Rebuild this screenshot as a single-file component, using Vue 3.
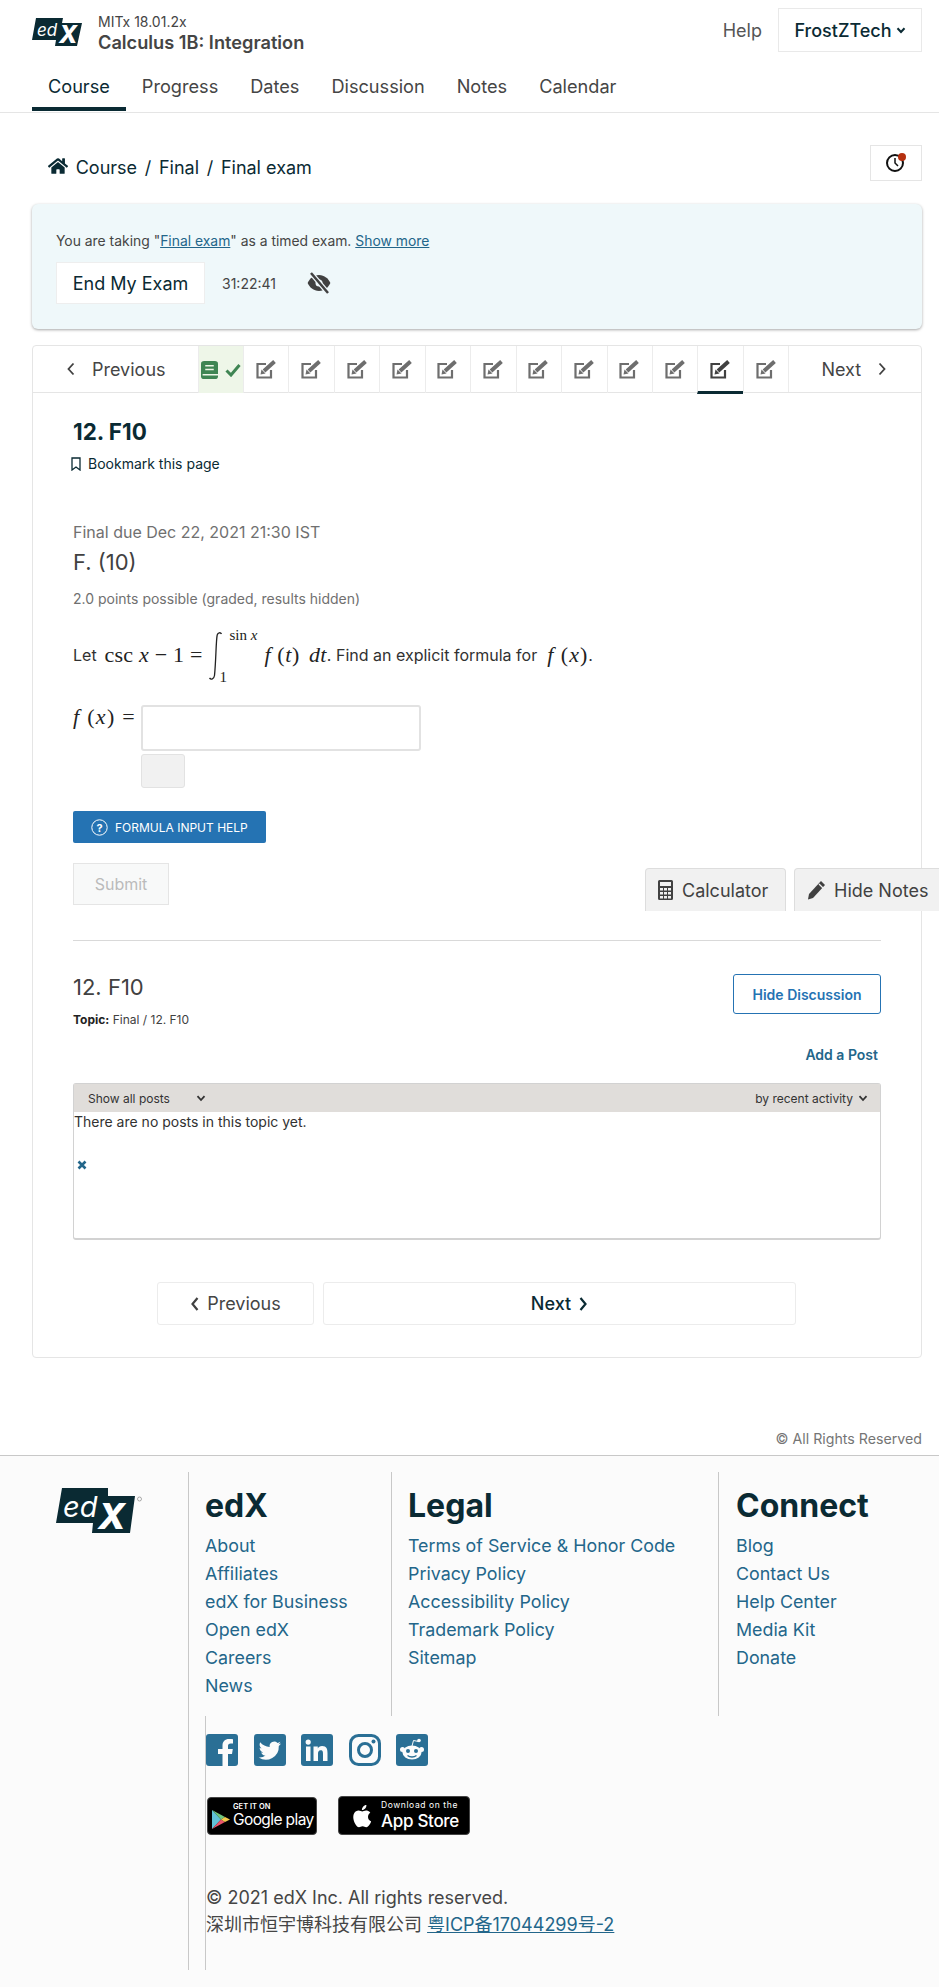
<template>
  <div class="page">
    <header class="top">
      <div class="top-row">
        <svg class="logo" viewBox="0 0 50 32">
          <polygon points="4,0 31,0 30,5 50,5 45,28 23,28 24,22 0,22" fill="#0a2a33" />
          <text x="5" y="18" font-size="17" font-style="italic" fill="#fff" class="logo-text">ed</text>
          <text x="27" y="25" font-size="24" font-weight="800" font-style="italic" fill="#fff" class="logo-text">X</text>
        </svg>
        <div class="course-name">
          <div class="course-org">MITx 18.01.2x</div>
          <div class="course-title">Calculus 1B: Integration</div>
        </div>
        <a class="help">Help</a>
        <div class="user-btn">
          FrostZTech
          <svg class="caret" viewBox="0 0 10 10"><path d="M1.5 3.2 5 7l3.5-3.8" fill="none" stroke="#0a2a33" stroke-width="2" /></svg>
        </div>
      </div>
      <nav class="tabs">
        <a v-for="(t, i) in tabs" :key="t" class="tab" :class="{ on: i === 0 }">{{ t }}</a>
      </nav>
    </header>

    <main class="main">
      <div class="crumb-row">
        <div class="crumbs">
          <svg class="home" viewBox="0 0 576 512"><path fill="#0a2a33" d="M280 148 96 300v164a16 16 0 0 0 16 16l112-.3a16 16 0 0 0 16-16V368a16 16 0 0 1 16-16h64a16 16 0 0 1 16 16v95.600a16 16 0 0 0 16 16l112 .4a16 16 0 0 0 16-16V300L296 148a12 12 0 0 0-16 0zM572 251l-84-69V44a12 12 0 0 0-12-12h-56a12 12 0 0 0-12 12v72l-89-74a48 48 0 0 0-61 0L4 251a12 12 0 0 0-2 17l26 31a12 12 0 0 0 17 2L280 107a12 12 0 0 1 16 0l235 194a12 12 0 0 0 17-2l26-31a12 12 0 0 0-2-17z" /></svg>
          <span>Course</span><span class="slash">/</span><span>Final</span><span class="slash">/</span><span>Final exam</span>
        </div>
        <div class="clock-btn">
          <svg viewBox="0 0 24 24" width="24" height="24">
            <circle cx="11" cy="12" r="8" fill="none" stroke="#111" stroke-width="2" />
            <path d="M11 7v5l3 3" fill="none" stroke="#111" stroke-width="1.500" />
            <circle cx="18" cy="6" r="4" fill="#b5300f" />
          </svg>
        </div>
      </div>

      <section class="banner">
        <p class="banner-text">You are taking "<a>Final exam</a>" as a timed exam. <a>Show more</a></p>
        <div class="banner-row">
          <div class="end-btn">End My Exam</div>
          <span class="timer">31:22:41</span>
          <svg class="eye" viewBox="0 0 24 22">
            <path fill="#414141" d="M12 3C6.500 3 2.500 6.800 .6 11c1.900 4.200 5.900 8 11.400 8s9.500-3.800 11.400-8C21.500 6.800 17.500 3 12 3z" />
            <circle cx="12" cy="11" r="3.500" fill="#f0f8fb" />
            <path d="M4 1l17 20" stroke="#f0f8fb" stroke-width="5" />
            <path d="M4 1l17 20" stroke="#414141" stroke-width="2.500" />
          </svg>
        </div>
      </section>

      <section class="card">
        <div class="seq">
          <div class="seq-end seq-prev">
            <svg class="chev" viewBox="0 0 10 16"><path d="M7.500 2.500 2.500 8l5 5.500" fill="none" stroke="#414141" stroke-width="1.800" /></svg>
            Previous
          </div>
          <div class="seq-item done">
            <svg width="17" height="18" viewBox="0 0 16 19" preserveAspectRatio="none">
              <path fill="#3f8553" d="M3 0h10a3 3 0 0 1 3 3v13a3 3 0 0 1-3 3H3a3 3 0 0 1-3-3V3a3 3 0 0 1 3-3z" />
              <path d="M4 5h8M4 9h8M1.500 14.500H16" stroke="#eef6e8" stroke-width="1.600" />
            </svg>
            <svg width="16" height="14" viewBox="0 0 16 14"><path d="M1.500 7.500 6 12 14.500 2" fill="none" stroke="#3f8553" stroke-width="3" /></svg>
          </div>
          <div v-for="n in 12" :key="n" class="seq-item" :class="{ active: n === 11 }">
            <svg width="21" height="19" viewBox="0 0 21 19" class="edit">
              <path d="M10 4H1.500v13.500H15V10" fill="none" stroke="currentColor" stroke-width="2.200" />
              <path d="M7 12 18 2" fill="none" stroke="#fff" stroke-width="6" />
              <path d="M8 11 18.500 1.500" fill="none" stroke="currentColor" stroke-width="4" />
              <polygon points="4.500,14.500 5.500,9.500 9.500,13.500" fill="currentColor" />
            </svg>
          </div>
          <div class="seq-end seq-next">
            Next
            <svg class="chev" viewBox="0 0 10 16"><path d="M2.500 2.500 7.500 8l-5 5.500" fill="none" stroke="#414141" stroke-width="1.800" /></svg>
          </div>
        </div>

        <div class="body">
          <h1 class="unit-title">12. F10</h1>
          <div class="bookmark">
            <svg width="10" height="14" viewBox="0 0 10 14"><path d="M1 1h8v12L5 10l-4 3z" fill="none" stroke="#0a2a33" stroke-width="1.300" /></svg>
            Bookmark this page
          </div>

          <div class="due">Final due Dec 22, 2021 21:30 IST</div>
          <h2 class="problem">F. (10)</h2>
          <div class="points">2.0 points possible (graded, results hidden)</div>

          <div class="math-line">
            <span>Let</span>
            <span class="m m-csc">csc <i>x</i> − 1 =</span>
            <span class="integral">
              <svg width="17" height="50" viewBox="0 0 17 50"><path d="M14.500 3c-1-2-3.500-1.500-4.300 1C9 9 9 30 7.500 44.500 7 48 4 49 2.500 47" fill="none" stroke="#222" stroke-width="1.300" /></svg>
              <span class="lim-up">sin <i>x</i></span>
              <span class="lim-lo">1</span>
            </span>
            <span class="m m-f"><i>f</i> (<i>t</i>)</span>
            <span class="m m-dt"><i>dt</i></span><span>. Find an explicit formula for</span>
            <span class="m m-fx"><i>f</i> (<i>x</i>)</span><span>.</span>
          </div>

          <div class="answer">
            <span class="m answer-label"><i>f</i> (<i>x</i>) =</span>
            <div class="answer-boxes">
              <div class="answer-input"></div>
              <div class="answer-small"></div>
            </div>
          </div>

          <div class="formula-btn">
            <svg width="17" height="17" viewBox="0 0 17 17"><circle cx="8.500" cy="8.500" r="7.700" fill="none" stroke="#fff" /><text x="8.500" y="12.500" font-size="11" font-weight="700" text-anchor="middle" fill="#fff" class="logo-text">?</text></svg>
            FORMULA INPUT HELP
          </div>
          <div class="submit">Submit</div>
          <hr class="rule" />

          <div class="disc-head">
            <div>
              <h2 class="disc-title">12. F10</h2>
              <div class="topic"><b>Topic:</b> Final / 12. F10</div>
            </div>
            <div class="hide-disc">Hide Discussion</div>
          </div>
          <div class="add-post">Add a Post</div>

          <div class="threads">
            <div class="threads-head">
              <span class="filter">Show all posts
                <svg class="caret" viewBox="0 0 10 10"><path d="M1.500 3.200 5 7l3.500-3.800" fill="none" stroke="#333" stroke-width="1.800" /></svg>
              </span>
              <span class="sort">by recent activity
                <svg class="caret" viewBox="0 0 10 10"><path d="M1.500 3.200 5 7l3.500-3.800" fill="none" stroke="#333" stroke-width="1.800" /></svg>
              </span>
            </div>
            <div class="threads-empty">There are no posts in this topic yet.</div>
            <svg class="close-x" width="10" height="10" viewBox="0 0 10 10"><path d="M1.500 1.500l7 7M8.500 1.500l-7 7" stroke="#23668a" stroke-width="2.600" /></svg>
          </div>

          <div class="bottom-nav">
            <div class="bottom-btn b-prev">
              <svg class="bchev" viewBox="0 0 10 16"><path d="M7.500 2 2.500 8l5 6" fill="none" stroke="#414141" stroke-width="2.200" /></svg>
              Previous
            </div>
            <div class="bottom-btn b-next">
              Next
              <svg class="bchev" viewBox="0 0 10 16"><path d="M2.500 2 7.500 8l-5 6" fill="none" stroke="#0a2a33" stroke-width="2.200" /></svg>
            </div>
          </div>
        </div>
      </section>
      <div class="rights">© All Rights Reserved</div>
    </main>

    <footer class="footer">
      <div class="foot-top">
        <div class="foot-logo">
          <svg width="88" height="54" viewBox="0 0 88 54">
            <polygon points="6,0 52,0 52,8 79,8 74,45 36,45 37,35 0,35" fill="#0a2a33" />
            <text x="7" y="29" font-size="29" font-style="italic" fill="#fff" class="logo-text">ed</text>
            <text x="42" y="41" font-size="36" font-weight="800" font-style="italic" fill="#fff" class="logo-text">X</text>
            <circle cx="83.500" cy="11" r="2" fill="none" stroke="#888" stroke-width=".7" />
          </svg>
        </div>
        <div v-for="c in columns" :key="c.title" class="foot-col" :class="c.cls">
          <h3>{{ c.title }}</h3>
          <a v-for="l in c.links" :key="l">{{ l }}</a>
        </div>
      </div>
      <div class="foot-lower">
        <div class="foot-bottom">
          <div class="foot-inner">
            <div class="socials">
              <svg width="32" height="32" viewBox="0 0 32 32"><rect width="32" height="32" rx="3" fill="#2a6f95" /><path fill="#fbfbfb" d="M22 32V20h4l.8-5H22v-3c0-1.500.7-2.500 2.700-2.500H27V5.200C26 5 24.500 5 23 5c-4 0-6.500 2.400-6.500 6.600V15H12v5h4.500v12z" /></svg>
              <svg width="32" height="32" viewBox="0 0 32 32"><rect width="32" height="32" rx="3" fill="#2a6f95" /><path fill="#fbfbfb" d="M27 9.500c-.8.400-1.700.6-2.600.8.900-.6 1.600-1.400 2-2.500-.9.500-1.800.9-2.900 1.100A4.600 4.600 0 0 0 15.700 13C11.900 12.800 8.500 11 6.200 8.200c-1.200 2.100-.6 4.800 1.400 6.100-.7 0-1.400-.2-2-.6 0 2.200 1.500 4.100 3.600 4.600-.7.200-1.400.2-2 .1.600 1.800 2.300 3.100 4.300 3.200A9.300 9.300 0 0 1 4.700 23.500 13 13 0 0 0 24.800 12c.9-.7 1.700-1.500 2.200-2.500z" /></svg>
              <svg width="32" height="32" viewBox="0 0 32 32"><rect width="32" height="32" rx="3" fill="#2a6f95" /><path fill="#fbfbfb" d="M5 12.500h4.500V27H5zM7.200 5.500a2.600 2.600 0 1 1 0 5.200 2.600 2.600 0 0 1 0-5.200zM12.500 12.500h4.300v2c.6-1.200 2.100-2.400 4.300-2.400 4.600 0 5.400 3 5.400 6.900V27H22v-7c0-1.700 0-3.800-2.300-3.800S17 18 17 19.900V27h-4.500z" /></svg>
              <svg width="32" height="32" viewBox="0 0 32 32"><rect x="1.500" y="1.500" width="29" height="29" rx="8" fill="none" stroke="#2a6f95" stroke-width="3" /><circle cx="16" cy="16" r="6.500" fill="none" stroke="#2a6f95" stroke-width="3" /><circle cx="24.500" cy="7.500" r="2" fill="#2a6f95" /></svg>
              <svg width="32" height="32" viewBox="0 0 32 32"><rect width="32" height="32" rx="3" fill="#2a6f95" /><ellipse cx="16" cy="18.500" rx="9.500" ry="7" fill="#fbfbfb" /><circle cx="6.500" cy="15.500" r="2.500" fill="#fbfbfb" /><circle cx="25.500" cy="15.500" r="2.500" fill="#fbfbfb" /><circle cx="23" cy="6.500" r="1.800" fill="#fbfbfb" /><path d="M16 12l1.500-5.500 5 1" fill="none" stroke="#fbfbfb" stroke-width="1" /><circle cx="12" cy="17" r="2" fill="#2a6f95" /><circle cx="20" cy="17" r="2" fill="#2a6f95" /><path d="M11.500 21.500c2.500 2 6.500 2 9 0" fill="none" stroke="#2a6f95" stroke-width="1.300" /></svg>
            </div>
            <div class="badges">
              <div class="badge gplay">
                <svg width="18" height="19" viewBox="0 0 18 19" class="play">
                  <polygon points="0,0 9,9.500 0,19" fill="#5fc3d8" />
                  <polygon points="0,0 13,7 9,9.500" fill="#6fc77e" />
                  <polygon points="0,19 13,12 9,9.500" fill="#e8556a" />
                  <polygon points="13,7 18,9.500 13,12 9,9.500" fill="#f2c94c" />
                </svg>
                <div class="gtext">
                  <span class="g1">GET IT ON</span>
                  <span class="g2">Google play</span>
                </div>
              </div>
              <div class="badge apple">
                <svg width="22" height="26" viewBox="0 0 22 26" class="applelogo"><path fill="#fff" d="M18 13.800c0-2.700 2.200-4 2.300-4.100-1.300-1.800-3.200-2.100-3.900-2.100-1.700-.2-3.200 1-4.100 1-.9 0-2.200-1-3.600-1-1.900 0-3.600 1.100-4.500 2.700-1.900 3.400-.5 8.400 1.400 11.100.9 1.300 2 2.800 3.400 2.800 1.400-.1 1.900-.9 3.600-.9s2.100.9 3.600.9 2.500-1.400 3.400-2.700c1.100-1.500 1.500-3 1.500-3.100-.1 0-3.100-1.200-3.100-4.600zM15.200 5.600c.8-1 1.300-2.300 1.200-3.600-1.100 0-2.500.7-3.300 1.700-.7.800-1.300 2.100-1.200 3.400 1.300.1 2.500-.6 3.300-1.500z" /></svg>
                <div class="atext">
                  <span class="a1">Download on the</span>
                  <span class="a2">App Store</span>
                </div>
              </div>
            </div>
            <div class="copy">
              <div>© 2021 edX Inc. All rights reserved.</div>
              <div>深圳市恒宇博科技有限公司 <a>粤ICP备17044299号-2</a></div>
            </div>
          </div>
        </div>
      </div>
    </footer>

    <div class="side-tab tab-calc">
      <svg width="15" height="20" viewBox="0 0 15 20"><path fill="#414141" fill-rule="evenodd" d="M1.500 0h12A1.500 1.500 0 0 1 15 1.500v17a1.500 1.500 0 0 1-1.500 1.500h-12A1.500 1.500 0 0 1 0 18.500v-17A1.500 1.500 0 0 1 1.500 0zM2 2v4h11V2zM2 8v2.500h3V8zm4 0v2.500h3V8zm4 0v2.500h3V8zm-8 4v2.500h3V12zm4 0v2.500h3V12zm4 0v2.500h3V12zm-8 4v2.500h3V16zm4 0v2.500h3V16zm4 0v2.500h3V16z" /></svg>
      Calculator
    </div>
    <div class="side-tab tab-notes">
      <svg width="19" height="20" viewBox="0 0 19 20"><path d="M14 1l4 4L6 18l-5 1.500L2 14z" fill="#414141" /><path d="M12 4l4 4" stroke="#f1f1f1" stroke-width="1.200" /></svg>
      Hide Notes
    </div>
  </div>
</template>

<script setup>
const tabs = ['Course', 'Progress', 'Dates', 'Discussion', 'Notes', 'Calendar']

const columns = [
  { title: 'edX', cls: 'c-edx', links: ['About', 'Affiliates', 'edX for Business', 'Open edX', 'Careers', 'News'] },
  { title: 'Legal', cls: 'c-legal', links: ['Terms of Service & Honor Code', 'Privacy Policy', 'Accessibility Policy', 'Trademark Policy', 'Sitemap'] },
  { title: 'Connect', cls: 'c-connect', links: ['Blog', 'Contact Us', 'Help Center', 'Media Kit', 'Donate'] },
]
</script>

<style>
html, body { margin: 0; background: #fff; }
</style>

<style scoped>
.page {
  position: relative;
  width: 939px;
  height: 1987px;
  overflow: hidden;
  font-family: Inter, "Noto Sans CJK SC", sans-serif;
  color: #414141;
  font-size: 16px;
}
a { color: #23668a; }

/* header */
.top { height: 113px; border-bottom: 1px solid #e5e5e5; box-sizing: border-box; padding: 8px 17px 0 32px; }
.top-row { display: flex; align-items: center; height: 44px; }
.logo { width: 50px; height: 32px; flex: none; margin-top: 8px; }
.logo-text { font-family: Inter, sans-serif; }
.course-name { margin-left: 16px; margin-top: 7px; }
.course-org { font-size: 14px; line-height: 16px; color: #454545; }
.course-title { font-size: 18.200px; font-weight: 600; line-height: 24px; margin-top: 0; color: #454545; }
.help { margin-left: auto; color: #555; font-size: 18px; }
.user-btn {
  margin-left: 16px;
  width: 144px;
  height: 44px;
  box-sizing: border-box;
  border: 1px solid #e9e9e9;
  display: flex;
  align-items: center;
  justify-content: center;
  gap: 4px;
  color: #0a2a33;
  font-weight: 500;
  font-size: 18px;
}
.caret { width: 10px; height: 10px; }
.tabs { display: flex; gap: 0; margin-top: 11px; height: 48px; }
.tab {
  padding: 0 16px;
  height: 48px;
  box-sizing: border-box;
  color: #454545;
  font-size: 18.150px;
  line-height: 46px;
}
.tab.on { color: #0a2a33; border-bottom: 4px solid #0a2a33; }

/* main */
.main { padding: 0 17px 0 32px; }
.crumb-row { display: flex; align-items: center; justify-content: space-between; height: 36px; margin-top: 32px; }
.crumbs { display: flex; align-items: center; padding-left: 16px; margin-top: 8px; color: #0a2a33; font-size: 18px; gap: 7.700px; }
.home { width: 20px; height: 18px; margin-top: -3px; }
.clock-btn {
  width: 52px;
  height: 36px;
  box-sizing: border-box;
  border: 1px solid #e5e5e5;
  display: flex;
  align-items: center;
  justify-content: center;
}

.banner {
  margin-top: 23px;
  height: 125px;
  box-sizing: border-box;
  background: #eff8fa;
  border-radius: 6px;
  box-shadow: 0 1px 3px rgba(0, 0, 0, 0.35);
  padding: 27px 24px 0;
}
.banner-text { margin: 0; font-size: 13.900px; line-height: 20px; color: #454545; }
.banner-text a { text-decoration: underline; }
.banner-row { display: flex; align-items: center; margin-top: 11px; }
.end-btn {
  width: 149px;
  height: 42px;
  background: #fff;
  box-sizing: border-box;
  border: 1px solid #eee;
  color: #0a2a33;
  font-size: 18px;
  font-weight: 400;
  display: flex;
  align-items: center;
  justify-content: center;
}
.timer { margin-left: 17px; font-size: 14px; color: #454545; }
.eye { width: 24px; height: 22px; margin-left: 31px; }

/* course card */
.card {
  margin-top: 16px;
  height: 1013px;
  box-sizing: border-box;
  border: 1px solid #e5e5e5;
  border-radius: 4px;
}
.seq { display: flex; height: 47px; border-bottom: 1px solid #e5e5e5; box-sizing: border-box; }
.seq-end { display: flex; align-items: center; color: #454545; font-size: 18px; }
.seq-prev { width: 164.500px; padding-left: 33px; gap: 16px; box-sizing: border-box; }
.seq-next { flex: 1; padding-left: 32px; gap: 16px; }
.chev { width: 10px; height: 16px; }
.seq-item {
  width: 45.460px;
  flex: none;
  box-sizing: border-box;
  border-left: 1px solid #ececec;
  height: 47px;
  display: flex;
  align-items: center;
  justify-content: center;
  color: #6e6e6e;
  gap: 6px;
}
.seq-next { border-left: 1px solid #ececec; }
.seq-item.done { background: #eef6e8; gap: 7px; }
.seq-item.active { color: #414141; border-bottom: 3px solid #0a2a33; height: 48px; padding-top: 2px; }

.body { padding: 24px 40px 0 40px; }
.unit-title { margin: 0; font-size: 22.400px; font-weight: 700; line-height: 30px; color: #0a2a33; }
.bookmark { display: flex; align-items: center; gap: 7px; margin-top: 7px; margin-left: -2px; font-size: 14px; line-height: 20px; color: #0a2a33; }
.due { margin-top: 46px; font-size: 16px; line-height: 24px; color: #707070; }
.problem { margin: 5px 0 0; font-size: 22px; font-weight: 400; line-height: 26px; color: #414141; }
.points { margin-top: 14px; font-size: 14px; line-height: 20px; color: #707070; }

.math-line { display: flex; align-items: center; height: 50px; margin-top: 21px; font-size: 16px; color: #313131; white-space: pre; }
.m { font-family: "Liberation Serif", serif; font-size: 22px; color: #222; }
.m-csc { margin-left: 8px; letter-spacing: .2px; }
.integral { position: relative; width: 55px; height: 50px; margin-left: 4px; display: block; top: 1px; }
.lim-up { position: absolute; left: 23px; top: -4px; font-family: "Liberation Serif", serif; font-size: 15px; color: #222; }
.lim-lo { position: absolute; left: 13px; top: 38px; font-family: "Liberation Serif", serif; font-size: 15px; color: #222; }
.m-f { margin-left: 3px; letter-spacing: .6px; }
.m-dt { margin-left: 9px; letter-spacing: .4px; }
.m-fx { margin-left: 10px; letter-spacing: 1px; }

.answer { display: flex; margin-top: 25px; }
.answer-label { width: 68px; line-height: 24px; white-space: pre; letter-spacing: 1.300px; }
.answer-boxes { display: flex; flex-direction: column; }
.answer-input { width: 280px; height: 46px; box-sizing: border-box; border: 2px solid #e2e2e2; border-radius: 3px; background: #fff; }
.answer-small { width: 44px; height: 34px; margin-top: 3px; box-sizing: border-box; border: 1px solid #e2e2e2; border-radius: 3px; background: #f1f1f1; }

.formula-btn {
  width: 193px;
  height: 32px;
  margin-top: 23px;
  background: #2573b3;
  border-radius: 2px;
  color: #fff;
  font-size: 12px;
  display: flex;
  align-items: center;
  gap: 7px;
  padding-left: 18px;
  box-sizing: border-box;
}
.submit {
  width: 96px;
  height: 42px;
  margin-top: 20px;
  box-sizing: border-box;
  background: #f8f9f9;
  border: 1px solid #e5e5e5;
  color: #bbb;
  font-size: 16px;
  display: flex;
  align-items: center;
  justify-content: center;
}
.rule { margin: 35px 0 0; border: 0; border-top: 1px solid #d9d9d9; }

.disc-head { display: flex; justify-content: space-between; margin-top: 33px; }
.disc-title { margin: 0; font-size: 22px; font-weight: 400; line-height: 26px; color: #414141; }
.topic { margin-top: 13px; font-size: 12px; line-height: 14px; color: #414141; }
.topic b { font-weight: 700; color: #222; }
.hide-disc {
  width: 148px;
  height: 40px;
  box-sizing: border-box;
  border: 1px solid #2573b3;
  border-radius: 3px;
  color: #2573b3;
  font-size: 14px;
  font-weight: 600;
  display: flex;
  align-items: center;
  justify-content: center;
}
.add-post { margin-top: 18px; text-align: right; padding-right: 3px; font-size: 14px; line-height: 20px; font-weight: 600; color: #23668a; }

.threads {
  margin-top: 18px;
  height: 157px;
  box-sizing: border-box;
  border: 1px solid #d2d2d2;
  border-bottom: 2px solid #d2d2d2;
  border-radius: 3px;
  background: #fff;
}
.threads-head {
  height: 28px;
  background: #e0ddda;
  display: flex;
  align-items: center;
  justify-content: space-between;
  font-size: 12px;
  color: #333;
  padding: 0 12px 0 14px;
}
.filter { display: flex; align-items: center; gap: 26px; }
.sort { display: flex; align-items: center; gap: 5px; }
.threads-empty { font-size: 14px; line-height: 20px; color: #313131; }
.close-x { display: block; margin: 28px 0 0 3px; }

.bottom-nav { display: flex; gap: 9px; margin: 42px 0 0 84px; }
.bottom-btn {
  height: 43px;
  box-sizing: border-box;
  border: 1px solid #ececec;
  border-radius: 3px;
  display: flex;
  align-items: center;
  justify-content: center;
  gap: 7px;
  font-size: 18px;
}
.b-prev { width: 157px; color: #454545; }
.b-next { width: 473px; color: #0a2a33; font-weight: 500; }
.bchev { width: 10px; height: 16px; }

.rights { margin-top: 71px; text-align: right; font-size: 14.200px; line-height: 20px; color: #757575; }

/* footer */
.footer { margin-top: 6px; height: 532px; box-sizing: border-box; border-top: 1px solid #c8c8c8; background: #fbfbfb; padding-top: 16px; }
.foot-top { display: flex; height: 244px; }
.foot-logo { width: 188px; padding: 16px 0 0 56px; box-sizing: border-box; }
.foot-col { border-left: 1px solid #c8c8c8; padding-left: 16px; box-sizing: border-box; }
.c-edx { width: 203px; }
.c-legal { width: 327px; }
.c-connect { flex: 1; padding-left: 17px; }
.foot-col h3 { margin: 14px 0 6px; font-size: 32px; line-height: 40px; font-weight: 700; color: #0a2a33; }
.foot-col a { display: block; font-size: 17.850px; line-height: 28px; color: #23668a; }

.foot-lower { padding-left: 188px; }
.foot-bottom { border-left: 1px solid #c8c8c8; height: 254px; padding-left: 16px; box-sizing: border-box; }
.foot-inner { border-left: 1px solid #c8c8c8; height: 254px; box-sizing: border-box; }
.socials { display: flex; gap: 15.500px; padding-top: 18px; }
.badges { display: flex; gap: 21px; margin-top: 30px; margin-left: 1px; align-items: center; }
.badge { background: #000; border: 1px solid #444; border-radius: 4px; box-sizing: border-box; color: #fff; display: flex; align-items: center; }
.gplay { width: 110px; height: 38px; padding-left: 4px; gap: 3px; }
.play { margin-top: 8px; }
.gtext { display: flex; flex-direction: column; }
.g1 { font-size: 7.500px; line-height: 9px; font-weight: 600; }
.g2 { font-size: 15.500px; line-height: 18px; letter-spacing: -0.600px; white-space: nowrap; }
.apple { width: 132px; height: 39px; padding-left: 11px; gap: 9px; }
.atext { display: flex; flex-direction: column; }
.a1 { font-size: 8.500px; line-height: 11px; letter-spacing: 0.600px; white-space: nowrap; }
.a2 { font-size: 17px; line-height: 20px; font-weight: 500; letter-spacing: -0.300px; white-space: nowrap; }
.copy { margin-top: 49px; font-size: 18px; line-height: 27px; color: #454545; }
.copy a { text-decoration: underline; }

.side-tab {
  position: absolute;
  top: 868px;
  height: 43px;
  box-sizing: border-box;
  background: #f1f1f1;
  border: 1px solid #ddd;
  border-bottom: 0;
  border-radius: 4px 4px 0 0;
  display: flex;
  align-items: center;
  font-size: 18px;
  color: #414141;
}
.tab-calc { left: 645px; width: 141px; padding-left: 12px; gap: 9px; }
.tab-notes { left: 794px; width: 160px; padding-left: 12px; gap: 8px; }
</style>
